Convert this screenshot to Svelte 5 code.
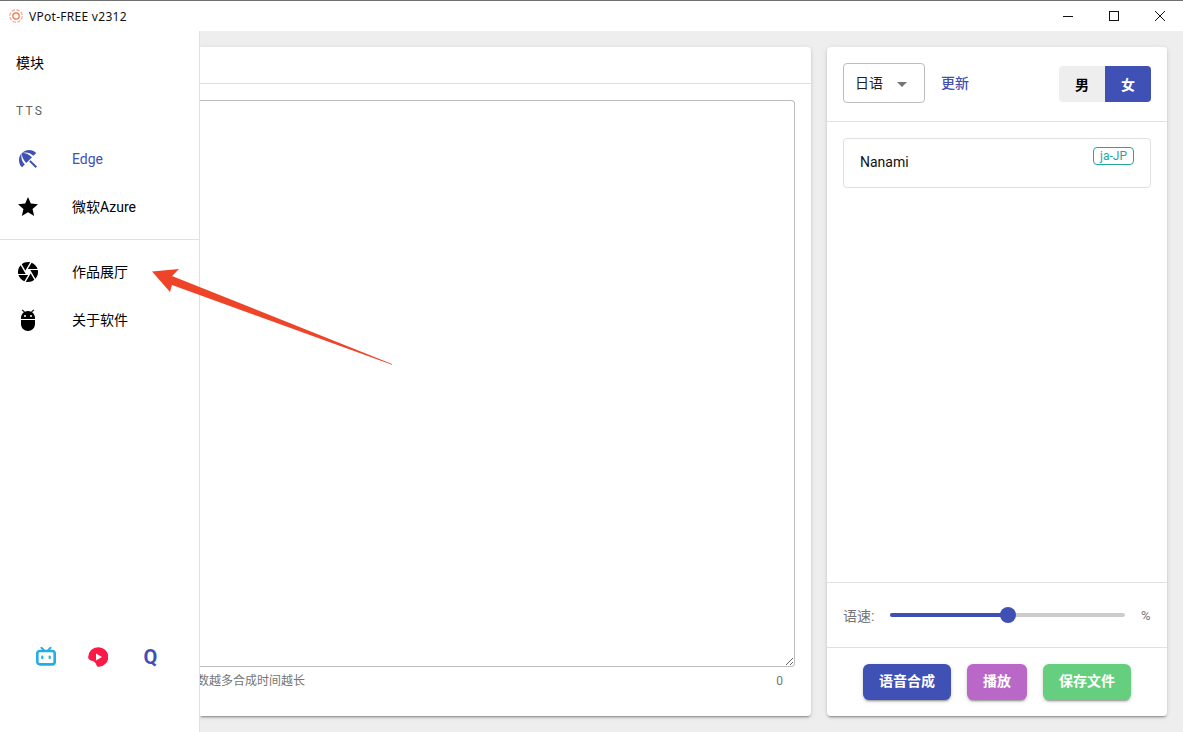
<script>
  const speed = 50;
  const nav = [
    { label: 'Edge', active: true, d: 'M13.13 14.56L14.56 13.13L21 19.57L19.57 21L13.13 14.56M17.42 8.83L20.28 5.97C16.33 2 9.93 2 6 5.95C9.91 4.65 14.29 5.7 17.42 8.83M5.95 6C2 9.93 2 16.33 5.97 20.28L8.83 17.42C5.7 14.29 4.65 9.91 5.95 6M5.97 5.96L5.96 5.97C5.58 9 7.13 12.89 10.25 16L16 10.25C12.89 7.13 9 5.58 5.97 5.96Z' },
    { label: '微软Azure', d: 'M12,17.27L18.18,21L16.54,13.97L22,9.24L14.81,8.62L12,2L9.19,8.62L2,9.24L7.45,13.97L5.82,21L12,17.27Z' }
  ];
  const nav2 = [
    { label: '作品展厅', d: 'M13.73,15L9.83,21.76C10.53,21.91 11.25,22 12,22C14.4,22 16.6,21.15 18.32,19.75L14.66,13.4M2.46,15C3.38,17.92 5.61,20.26 8.45,21.34L12.12,15M8.54,12L4.64,5.25C3,7 2,9.39 2,12C2,12.68 2.07,13.35 2.2,14H9.69M21.8,10H14.31L14.6,10.5L19.36,18.75C21,16.97 22,14.6 22,12C22,11.31 21.93,10.64 21.8,10M21.54,9C20.62,6.07 18.39,3.74 15.55,2.66L11.88,9M9.4,10.5L14.17,2.24C13.47,2.09 12.75,2 12,2C9.6,2 7.4,2.84 5.68,4.25L9.34,10.6L9.4,10.5Z' },
    { label: '关于软件', d: 'M15,9A1,1 0 0,1 14,8A1,1 0 0,1 15,7A1,1 0 0,1 16,8A1,1 0 0,1 15,9M9,9A1,1 0 0,1 8,8A1,1 0 0,1 9,7A1,1 0 0,1 10,8A1,1 0 0,1 9,9M16.12,4.37L18.22,2.27L17.4,1.44L15.09,3.75C14.16,3.28 13.11,3 12,3C10.88,3 9.84,3.28 8.91,3.75L6.6,1.44L5.78,2.27L7.88,4.37C6.14,5.64 5,7.68 5,10V11H19V10C19,7.68 17.86,5.64 16.12,4.37M5,16C5,19.86 8.13,23 12,23A7,7 0 0,0 19,16V12H5V16Z' }
  ];
</script>

<div class="window">
  <header class="titlebar">
    <svg class="logo" viewBox="0 0 14 14" width="14" height="14">
      <circle cx="7" cy="7" r="6.2" fill="none" stroke="#f7a58c" stroke-width="1.2" stroke-dasharray="3.4 1.4" />
      <circle cx="7" cy="7" r="3.2" fill="none" stroke="#ee6a45" stroke-width="1.2" />
    </svg>
    <span class="title">VPot-FREE v2312</span>
    <div class="winbtns">
      <svg viewBox="0 0 10 10" width="10" height="10"><path d="M0 5.5H10" stroke="#111" fill="none" /></svg>
      <svg viewBox="0 0 10 10" width="10" height="10"><rect x="0.5" y="0.5" width="9" height="9" stroke="#111" fill="none" /></svg>
      <svg viewBox="0 0 10 10" width="10" height="10"><path d="M0 0L10 10M10 0L0 10" stroke="#111" fill="none" /></svg>
    </div>
  </header>

  <div class="content">
    <aside class="drawer">
      <div class="heading">模块</div>
      <div class="subheading">TTS</div>
      {#each nav as item}
        <div class="item" class:active={item.active}>
          <svg viewBox="0 0 24 24" width="24" height="24"><path d={item.d} fill="currentColor" /></svg>
          <span>{item.label}</span>
        </div>
      {/each}
      <hr class="divider" />
      {#each nav2 as item}
        <div class="item">
          <svg viewBox="0 0 24 24" width="24" height="24"><path d={item.d} fill="currentColor" /></svg>
          <span>{item.label}</span>
        </div>
      {/each}
      <div class="socials">
        <svg viewBox="0 0 20 20" width="20" height="20">
          <path d="M5.5 0.8L8.2 3.6M14.5 0.8L11.8 3.6" stroke="#23ade5" stroke-width="2" stroke-linecap="round" fill="none" />
          <rect x="1.3" y="4" width="17.4" height="13.4" rx="2.6" fill="none" stroke="#23ade5" stroke-width="2.6" />
          <rect x="5.2" y="8.6" width="2.2" height="3.6" rx="1.1" fill="#23ade5" />
          <rect x="12.6" y="8.6" width="2.2" height="3.6" rx="1.1" fill="#23ade5" />
        </svg>
        <svg class="red" viewBox="0 0 20 20" width="20" height="20">
          <path d="M10 0.2A9.8 9.8 0 0 1 11 19.8C9.6 19.9 8.6 18.8 8.2 17.4C7.8 15.9 6.6 14.4 4.6 13.9C2.6 13.4 0.2 12.6 0.2 10A9.8 9.8 0 0 1 10 0.2Z" fill="#fb1a47" />
          <path d="M8 6.4L14 10L8 13.6Z" fill="#fff" />
        </svg>
        <span class="qq">Q</span>
      </div>
    </aside>

    <main class="main">
      <section class="card editor">
        <div class="tabs"></div>
        <div class="editor-body">
          <textarea class="text"></textarea>
        </div>
        <div class="hint">
          <span class="hint-text">数越多合成时间越长</span>
          <span>0</span>
        </div>
      </section>

      <section class="card voices">
        <div class="voice-head">
          <div class="select">
            <span>日语</span>
            <i class="caret"></i>
          </div>
          <span class="refresh">更新</span>
          <div class="toggle">
            <span>男</span>
            <span class="on">女</span>
          </div>
        </div>
        <div class="voice-list">
          <div class="voice">
            <span>Nanami</span>
            <span class="badge">ja-JP</span>
          </div>
        </div>
        <div class="speed">
          <span class="speed-label">语速:</span>
          <div class="track">
            <div class="fill" style="width: {speed}%"></div>
            <div class="thumb" style="left: {speed}%"></div>
          </div>
          <span class="unit">%</span>
        </div>
        <div class="actions">
          <button class="btn indigo">语音合成</button>
          <button class="btn purple">播放</button>
          <button class="btn green">保存文件</button>
        </div>
      </section>
    </main>
  </div>

  <svg class="arrow" viewBox="0 0 1183 732" width="1183" height="732">
    <polygon points="152,271.5 179,269 172,276 392,364 392,364.8 172,285 170,292" fill="#ee4427" />
  </svg>
</div>

<style>
  :global(body) {
    margin: 0;
    overflow: hidden;
    background: #eee;
  }
  .window {
    position: relative;
    height: 732px;
    display: flex;
    flex-direction: column;
    font-family: Roboto, "Noto Sans CJK SC", sans-serif;
    font-size: 14px;
    color: #000;
    background: #eee;
  }
  .titlebar {
    height: 30px;
    flex: none;
    box-sizing: content-box;
    border-top: 1px solid #707070;
    background: #fff;
    display: flex;
    align-items: center;
    padding-left: 9px;
  }
  .title {
    margin-left: 6px;
    font-family: "Noto Sans", "Open Sans", sans-serif;
    font-size: 12px;
    letter-spacing: 0.28px;
    color: #111;
  }
  .winbtns {
    margin-left: auto;
    display: flex;
    gap: 36px;
    padding-right: 18px;
  }
  .content {
    flex: 1;
    display: flex;
    min-height: 0;
  }
  .drawer {
    width: 199px;
    flex: none;
    background: #fff;
    border-right: 1px solid #e0e0e0;
    display: flex;
    flex-direction: column;
    position: relative;
    z-index: 1;
  }
  .heading {
    height: 52px;
    padding-top: 5px;
    display: flex;
    align-items: center;
    padding-left: 16px;
  }
  .subheading {
    height: 45px;
    padding-bottom: 2px;
    display: flex;
    align-items: center;
    padding-left: 16px;
    font-size: 12px;
    letter-spacing: 2.2px;
    color: #616161;
  }
  .item {
    height: 48px;
    display: flex;
    align-items: center;
    padding-left: 16px;
    gap: 32px;
    font-size: 14px;
  }
  .item:not(.active) span {
    margin-bottom: 2px;
  }
  .item.active {
    color: #3f51b5;
  }
  .divider {
    border: 0;
    border-top: 1px solid #e0e0e0;
    margin: 8px 0;
  }
  .socials {
    margin-top: auto;
    margin-bottom: 65px;
    padding: 0 19px;
    display: grid;
    grid-template-columns: 53px 52px 53px;
    justify-items: center;
    align-items: center;
    height: 20px;
  }
  .qq {
    color: #3f51b5;
    font-weight: 700;
    font-size: 20px;
    line-height: 20px;
  }
  .main {
    flex: 1;
    min-width: 0;
    display: flex;
    gap: 16px;
    padding: 16px;
    padding-left: 0;
    box-sizing: border-box;
  }
  .card {
    background: #fff;
    border-radius: 4px;
    box-shadow: 0 3px 1px -2px rgba(0,0,0,.2), 0 2px 2px 0 rgba(0,0,0,.14), 0 1px 5px 0 rgba(0,0,0,.12);
    display: flex;
    flex-direction: column;
    min-height: 0;
  }
  .editor {
    flex: 1;
    min-width: 0;
    border-top-left-radius: 0;
    border-bottom-left-radius: 0;
  }
  .tabs {
    height: 36px;
    flex: none;
    border-bottom: 1px solid #e0e0e0;
  }
  .editor-body {
    flex: 1;
    display: flex;
    padding: 16px 16px 0 0;
    min-height: 0;
  }
  .text {
    flex: 1;
    box-sizing: border-box;
    border: 1px solid #bdbdbd;
    border-left: 0;
    border-radius: 0 4px 4px 0;
    outline: none;
    margin: 0;
    background: #fff;
    resize: both;
  }
  .hint {
    height: 49px;
    flex: none;
    box-sizing: border-box;
    display: flex;
    justify-content: space-between;
    padding: 6px 28px 0 0;
    font-size: 12px;
    line-height: 16px;
    color: #757575;
  }
  .hint-text {
    margin-left: -3px;
  }
  .voices {
    width: 340px;
    flex: none;
  }
  .voice-head {
    height: 74px;
    flex: none;
    border-bottom: 1px solid #e0e0e0;
    display: flex;
    align-items: center;
    padding: 0 16px;
  }
  .select {
    width: 82px;
    height: 40px;
    margin-top: -2px;
    box-sizing: border-box;
    border: 1px solid #bdbdbd;
    border-radius: 4px;
    display: flex;
    align-items: center;
    padding: 0 0 2px 11px;
    gap: 14px;
    color: #212121;
  }
  .caret {
    width: 0;
    height: 0;
    border-left: 5px solid transparent;
    border-right: 5px solid transparent;
    border-top: 5px solid #757575;
    margin-top: 4px;
  }
  .refresh {
    margin-left: 16px;
    margin-top: -4px;
    color: #3f51b5;
    font-weight: 500;
  }
  .toggle {
    margin-left: auto;
    display: flex;
    height: 36px;
    border-radius: 4px;
    overflow: hidden;
    background: #eee;
    font-weight: 700;
  }
  .toggle span {
    width: 46px;
    display: flex;
    align-items: center;
    justify-content: center;
  }
  .toggle .on {
    background: #3f51b5;
    color: #fff;
  }
  .voice-list {
    flex: 1;
    padding: 16px;
    min-height: 0;
  }
  .voice {
    position: relative;
    height: 50px;
    box-sizing: border-box;
    border: 1px solid #e0e0e0;
    border-radius: 4px;
    padding: 0 0 2px 16px;
    display: flex;
    align-items: center;
    color: #111;
  }
  .badge {
    position: absolute;
    top: 8px;
    right: 16px;
    height: 18px;
    width: 41px;
    box-sizing: border-box;
    border: 1px solid #26a69a;
    border-radius: 4px;
    color: #26a69a;
    font-size: 12px;
    line-height: 16px;
    text-align: center;
  }
  .speed {
    height: 65px;
    flex: none;
    box-sizing: border-box;
    border-top: 1px solid #e0e0e0;
    display: flex;
    align-items: center;
    padding: 0 16px;
    color: #757575;
  }
  .speed-label {
    width: 47px;
    flex: none;
  }
  .track {
    position: relative;
    flex: 1;
    height: 4px;
    border-radius: 2px;
    background: #ccc;
  }
  .fill {
    height: 100%;
    border-radius: 2px;
    background: #3f51b5;
  }
  .thumb {
    position: absolute;
    top: -6px;
    width: 16px;
    height: 16px;
    margin-left: -8px;
    border-radius: 50%;
    background: #3f51b5;
  }
  .unit {
    margin-left: 16px;
    width: 10px;
    flex: none;
    font-size: 13px;
  }
  .actions {
    height: 69px;
    flex: none;
    box-sizing: border-box;
    border-top: 1px solid #e0e0e0;
    display: flex;
    align-items: center;
    justify-content: center;
    gap: 16px;
  }
  .btn {
    height: 36px;
    padding: 0 16px 4px;
    border: 0;
    border-radius: 6px;
    color: #fff;
    font: 700 14px Roboto, "Noto Sans CJK SC", sans-serif;
    box-shadow: 0 3px 1px -2px rgba(0,0,0,.2), 0 2px 2px 0 rgba(0,0,0,.14), 0 1px 5px 0 rgba(0,0,0,.12);
  }
  .indigo { background: #3f51b5; }
  .purple { background: #ba68c8; }
  .green { background: #66cf7f; }
  .arrow {
    position: absolute;
    left: 0;
    top: 0;
    z-index: 2;
    pointer-events: none;
  }
</style>
